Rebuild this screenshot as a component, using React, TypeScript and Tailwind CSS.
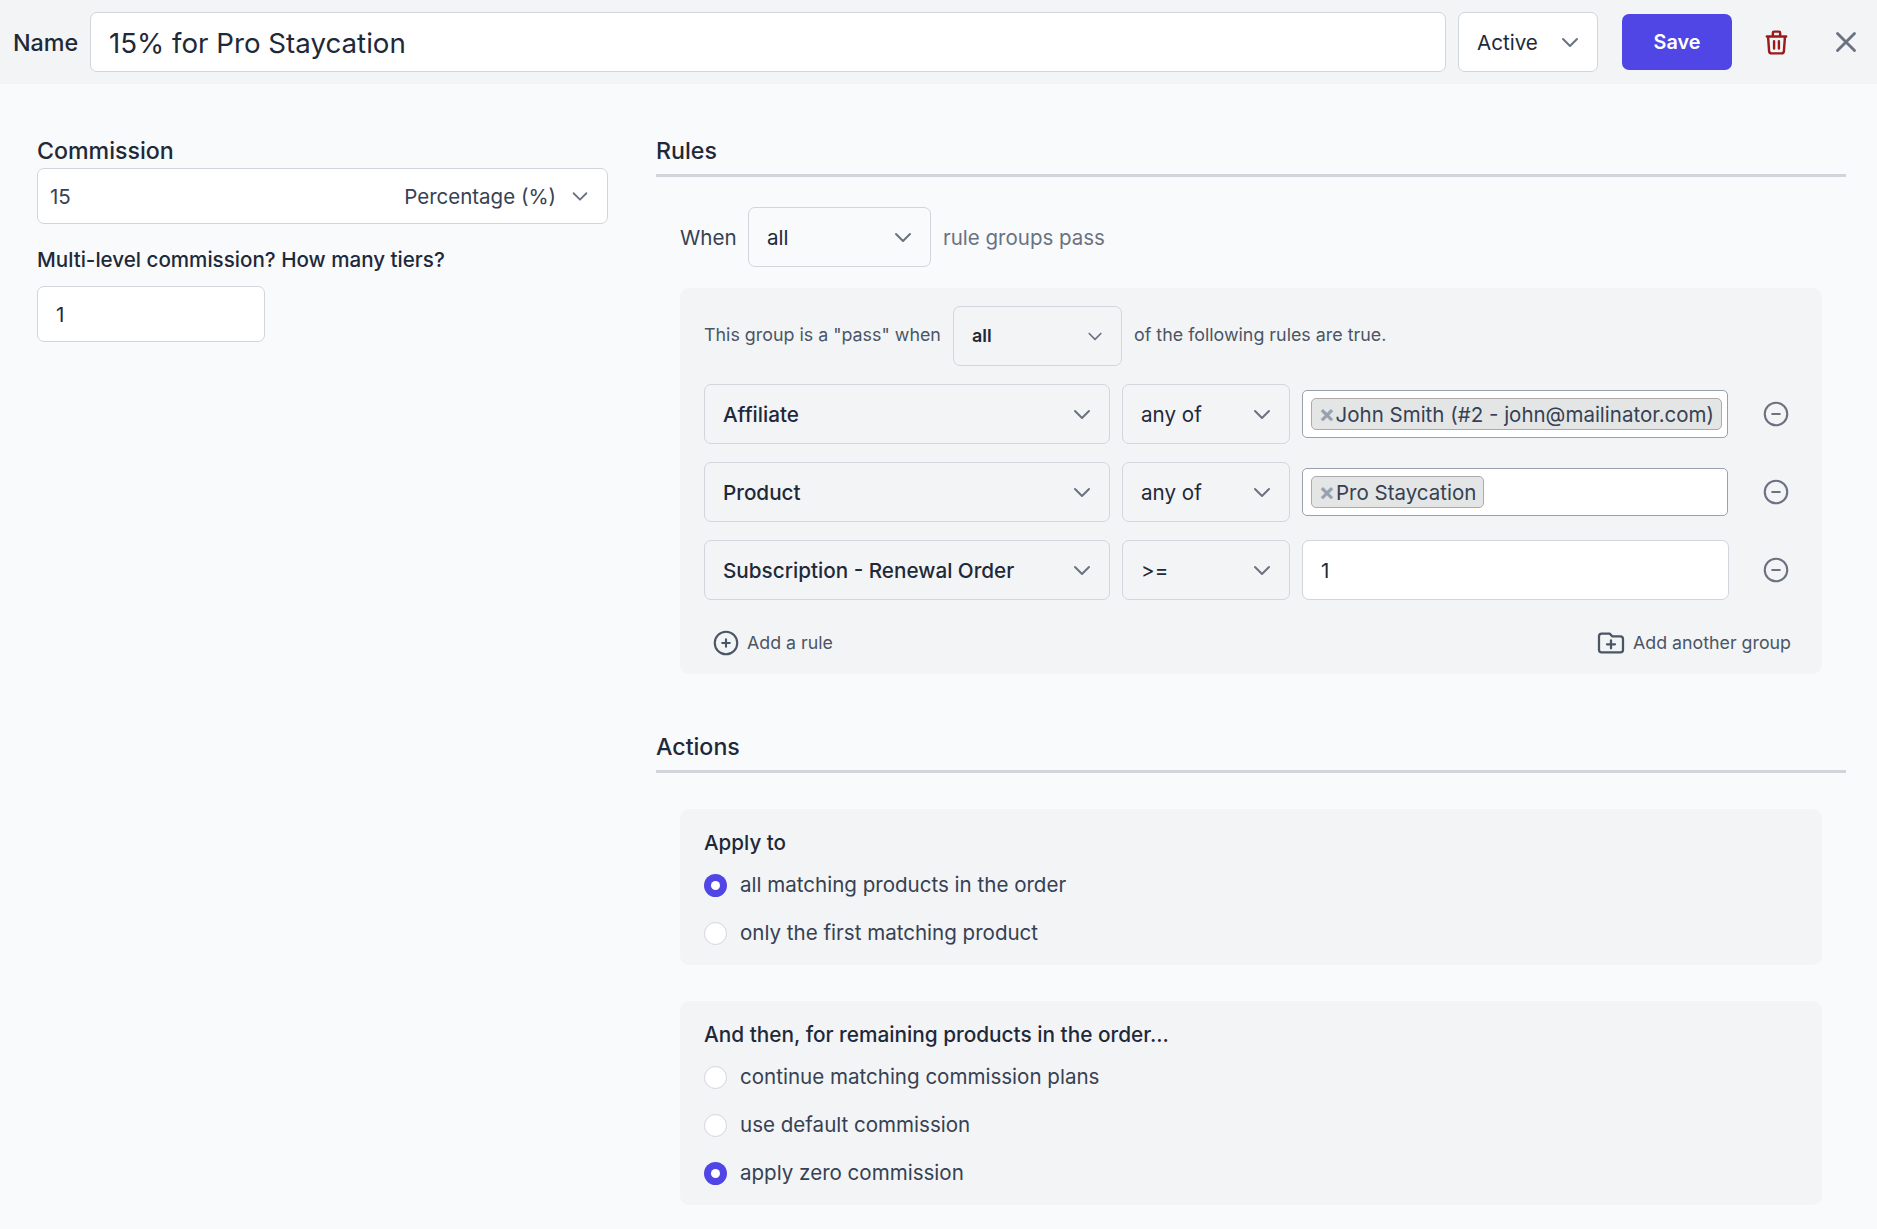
import React from "react";

const Chevron = ({ className = "w-[24px] h-[24px] text-gray-500" }: { className?: string }) => (
  <svg className={className} viewBox="0 0 24 24" fill="none" stroke="currentColor" strokeWidth={2} strokeLinecap="round" strokeLinejoin="round">
    <path d="M19 9l-7 7-7-7" />
  </svg>
);

const Select = ({ label, className = "pr-[15px]", textClass = "pt-[2px] text-[20.6px] text-gray-800", chevron }: { label: string; className?: string; textClass?: string; chevron?: string }) => (
  <div className={`h-[60px] flex items-center justify-between pl-[18px] border border-gray-300 rounded-[7px] ${className}`}>
    <span className={textClass}>{label}</span>
    <Chevron className={chevron} />
  </div>
);

const MinusCircle = () => (
  <svg className="w-[30px] h-[30px] text-gray-500" viewBox="0 0 24 24" fill="none" stroke="currentColor" strokeWidth={1.7} strokeLinecap="round" strokeLinejoin="round">
    <path d="M15 12H9m12 0a9 9 0 11-18 0 9 9 0 0118 0z" />
  </svg>
);

const Chip = ({ label, className = "" }: { label: string; className?: string }) => (
  <div className={`h-[32px] flex items-center pl-[6px] pr-[7px] bg-[#e4e6e6] border border-[#aaaaaa] rounded-[5px] text-[20.5px] text-gray-700 whitespace-nowrap ${className}`}>
    <span className="text-gray-400 text-[24px] font-bold leading-none w-[18px] text-center">×</span>
    <span className="pt-[2px]">{label}</span>
  </div>
);

const Row = ({ field, op, children }: { field: string; op: string; children: React.ReactNode }) => (
  <div className="flex items-center h-[60px]">
    <Select label={field} className="w-[406px] pr-[15px]" textClass="pt-[2px] text-[20.7px] font-medium text-gray-800" />
    <Select label={op} className="w-[168px] ml-[12px] pr-[15px]" />
    <div className="w-[427px] ml-[12px] flex items-center">{children}</div>
    <div className="ml-[32px]"><MinusCircle /></div>
  </div>
);

const Radio = ({ label, on = false }: { label: string; on?: boolean }) => (
  <div className="flex items-center h-[24px]">
    {on ? (
      <span className="w-[23px] h-[23px] rounded-full bg-[#4f46e5] flex items-center justify-center">
        <span className="w-[9px] h-[9px] rounded-full bg-white" />
      </span>
    ) : (
      <span className="w-[23px] h-[23px] rounded-full bg-white border border-gray-300" />
    )}
    <span className="ml-[13px] text-[20.55px] text-gray-700">{label}</span>
  </div>
);

const Heading = ({ children, className = "" }: { children: React.ReactNode; className?: string }) => (
  <div className={`h-[41px] border-b-[3px] border-[#d1d5db] text-[23.2px] leading-[30px] font-medium text-gray-800 ${className}`}>{children}</div>
);

export default function App() {
  return (
    <div className="min-h-[1229px] bg-[#f9fafb] font-['Inter',sans-serif] text-gray-800">
      <header className="h-[84px] bg-[#f3f4f6] flex items-center pl-[13px]">
        <span className="text-[23.3px] font-medium text-gray-800 w-[77px] pt-[2px]">Name</span>
        <div className="w-[1356px] h-[60px] bg-white border border-gray-300 rounded-[7px] flex items-center pl-[18px] pt-[4px] text-[27.7px] text-gray-800">15% for Pro Staycation</div>
        <Select label="Active" className="w-[140px] ml-[12px] bg-white pr-[15px]" />
        <button className="w-[110px] h-[56px] ml-[24px] pt-[2px] bg-[#4f46e5] rounded-[7px] text-white text-[19.8px] font-semibold">Save</button>
        <svg className="w-[29px] h-[29px] ml-[30px] text-[#991b1b]" viewBox="0 0 24 24" fill="none" stroke="currentColor" strokeWidth={2} strokeLinecap="round" strokeLinejoin="round">
          <path d="M19 7l-.867 12.142A2 2 0 0116.138 21H7.862a2 2 0 01-1.995-1.858L5 7m5 4v6m4-6v6m1-10V4a1 1 0 00-1-1h-4a1 1 0 00-1 1v3M4 7h16" />
        </svg>
        <svg className="w-[34px] h-[34px] ml-[38px] text-gray-500" viewBox="0 0 24 24" fill="none" stroke="currentColor" strokeWidth={2} strokeLinecap="round" strokeLinejoin="round">
          <path d="M6 18L18 6M6 6l12 12" />
        </svg>
      </header>

      <main className="flex pl-[37px] pt-[52px]">
        <div className="w-[571px]">
          <div className="h-[30px] text-[23.2px] leading-[30px] font-medium text-gray-800">Commission</div>
          <div className="mt-[2px] h-[56px] bg-white border border-gray-300 rounded-[7px] flex items-center justify-between pl-[12px] pr-[16px] text-[20.5px] text-gray-700">
            <span className="pt-[2px]">15</span>
            <span className="flex items-center gap-[13px]"><span className="pt-[2px]">Percentage (%)</span><Chevron className="w-[22px] h-[22px] text-gray-500" /></span>
          </div>
          <div className="mt-[24px] h-[24px] text-[20.6px] leading-[24px] font-medium text-gray-800">Multi-level commission? How many tiers?</div>
          <div className="mt-[14px] w-[228px] h-[56px] bg-white border border-gray-300 rounded-[7px] flex items-center pl-[18px] pt-[2px] text-[20.6px] text-gray-800">1</div>
        </div>

        <div className="ml-[48px] w-[1190px]">
          <Heading>Rules</Heading>
          <div className="mt-[30px] ml-[24px] flex items-center h-[60px]">
            <span className="text-[20.6px] text-gray-700 w-[68px] pt-[2px]">When</span>
            <Select label="all" className="w-[183px] pr-[15px]" />
            <span className="ml-[12px] text-[20.5px] text-gray-500 pt-[2px]">rule groups pass</span>
          </div>

          <section className="mt-[21px] ml-[24px] w-[1142px] h-[386px] bg-[#f3f4f6] rounded-[9px] px-[24px] pt-[18px]">
            <div className="flex items-center h-[60px] text-[17.85px] text-gray-600">
              <span className="w-[249px] whitespace-nowrap pb-[1px]">This group is a "pass" when</span>
              <Select label="all" className="w-[169px] pr-[16px]" textClass="text-[17.9px] font-semibold text-gray-800" chevron="w-[20px] h-[20px] text-gray-500" />
              <span className="ml-[12px] pb-[1px]">of the following rules are true.</span>
            </div>
            <div className="mt-[18px] flex flex-col gap-[18px]">
              <Row field="Affiliate" op="any of">
                <div className="w-[426px] h-[48px] bg-white border border-gray-400 rounded-[5px] flex items-center pl-[8px]">
                  <Chip label="John Smith (#2 - john@mailinator.com)" className="w-[411px]" />
                </div>
              </Row>
              <Row field="Product" op="any of">
                <div className="w-[426px] h-[48px] bg-white border border-gray-400 rounded-[5px] flex items-center pl-[8px]">
                  <Chip label="Pro Staycation" />
                </div>
              </Row>
              <Row field="Subscription - Renewal Order" op=">=">
                <div className="w-full h-[60px] bg-white border border-gray-300 rounded-[7px] flex items-center pl-[18px] pt-[2px] text-[20.6px] text-gray-800">1</div>
              </Row>
            </div>
            <div className="mt-[28px] h-[30px] flex items-center justify-between text-[17.8px] text-gray-600 pl-[7px] pr-[7px]">
              <span className="flex items-center gap-[6px]">
                <svg className="w-[30px] h-[30px]" viewBox="0 0 24 24" fill="none" stroke="currentColor" strokeWidth={1.7} strokeLinecap="round" strokeLinejoin="round">
                  <path d="M12 9v3m0 0v3m0-3h3m-3 0H9m12 0a9 9 0 11-18 0 9 9 0 0118 0z" />
                </svg>
                <span>Add a rule</span>
              </span>
              <span className="flex items-center gap-[6px]">
                <svg className="w-[32px] h-[32px]" viewBox="0 0 24 24" fill="none" stroke="currentColor" strokeWidth={1.7} strokeLinecap="round" strokeLinejoin="round">
                  <path d="M9 13h6m-3-3v6m-9 1V7a2 2 0 012-2h6l2 2h6a2 2 0 012 2v8a2 2 0 01-2 2H5a2 2 0 01-2-2z" />
                </svg>
                <span>Add another group</span>
              </span>
            </div>
          </section>

          <Heading className="mt-[58px]">Actions</Heading>

          <section className="mt-[36px] ml-[24px] w-[1142px] h-[156px] bg-[#f3f4f6] rounded-[9px] px-[24px] pt-[22px]">
            <div className="h-[24px] text-[20.6px] leading-[24px] font-medium text-gray-800">Apply to</div>
            <div className="mt-[18px] flex flex-col gap-[24px]">
              <Radio label="all matching products in the order" on />
              <Radio label="only the first matching product" />
            </div>
          </section>

          <section className="mt-[36px] ml-[24px] w-[1142px] h-[204px] bg-[#f3f4f6] rounded-[9px] px-[24px] pt-[22px]">
            <div className="h-[24px] text-[20.8px] leading-[24px] font-medium text-gray-800">And then, for remaining products in the order...</div>
            <div className="mt-[18px] flex flex-col gap-[24px]">
              <Radio label="continue matching commission plans" />
              <Radio label="use default commission" />
              <Radio label="apply zero commission" on />
            </div>
          </section>
        </div>
      </main>
    </div>
  );
}
